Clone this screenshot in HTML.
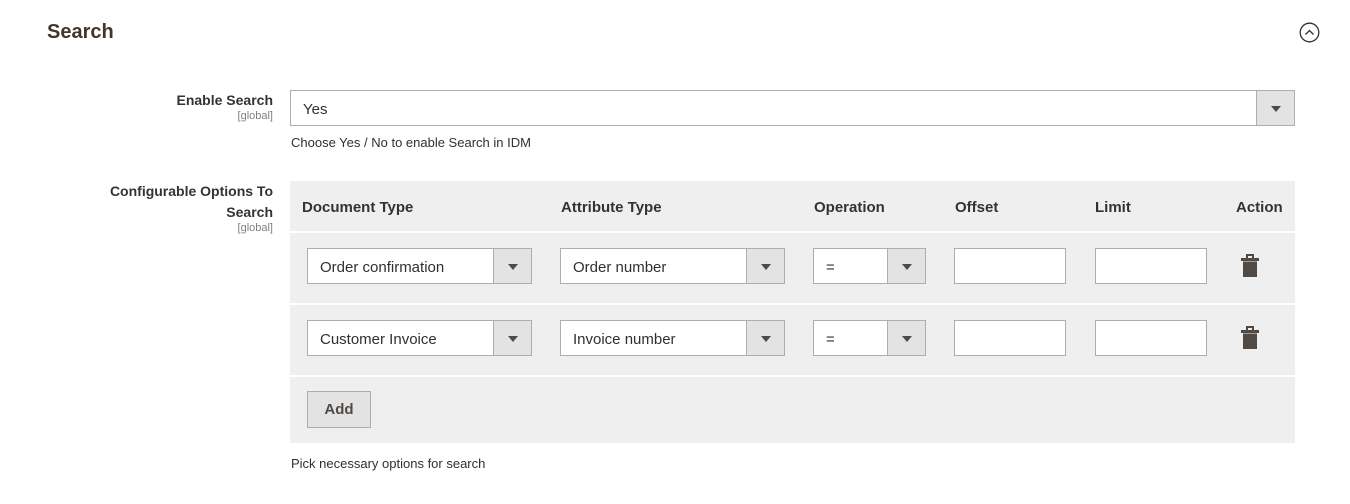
<!DOCTYPE html>
<html><head><style>
*{box-sizing:border-box;margin:0;padding:0}
body{width:1350px;height:504px;background:#fff;font-family:"Liberation Sans",sans-serif;color:#303030;position:relative;overflow:hidden}
.a{position:absolute}
.lbl{position:absolute;right:1077px;text-align:right;font-size:14px;font-weight:bold;color:#333;line-height:21px}
.sc{position:absolute;right:1077px;font-size:11px;color:#808080}
.sel{position:absolute;height:36px;border:1px solid #adadad;background:#fff;font-size:15px;line-height:37px;padding-left:12px;color:#303030}
.sel .ar{position:absolute;right:0;top:0;bottom:0;width:38px;background:#e3e3e3;border-left:1px solid #adadad}
.sel .ar:after{content:"";position:absolute;left:14px;top:15px;border-left:5px solid transparent;border-right:5px solid transparent;border-top:6px solid #514943}
.inp{position:absolute;height:36px;border:1px solid #adadad;background:#fff}
.th{position:absolute;top:199px;font-size:15px;font-weight:bold;color:#333}
.note{position:absolute;font-size:13px;color:#303030}
.trash{position:absolute;width:18px;height:24px}
</style></head><body>
<div class="a" style="left:47px;top:21px;font-size:20px;font-weight:bold;color:#41362f">Search</div>
<svg class="a" style="left:1299px;top:22px" width="21" height="21" viewBox="0 0 21 21"><circle cx="10.5" cy="10.5" r="9.3" fill="none" stroke="#303030" stroke-width="1.3"/><path d="M6.5 12.5 L10.5 8.5 L14.5 12.5" fill="none" stroke="#303030" stroke-width="1.3"/></svg>

<div class="lbl" style="top:90px">Enable Search</div>
<div class="sc" style="top:110px">[global]</div>
<div class="sel" style="left:290px;top:90px;width:1005px">Yes<div class="ar"></div></div>
<div class="note" style="left:291px;top:135px">Choose Yes / No to enable Search in IDM</div>

<div class="lbl" style="top:181px">Configurable Options To<br>Search</div>
<div class="sc" style="top:222px">[global]</div>

<div class="a" style="left:290px;top:181px;width:1005px;height:262px;background:#efefef"></div>
<div class="a" style="left:290px;top:231px;width:1005px;height:2px;background:#fff"></div>
<div class="a" style="left:290px;top:303px;width:1005px;height:2px;background:#fff"></div>
<div class="a" style="left:290px;top:375px;width:1005px;height:2px;background:#fff"></div>
<div class="th" style="left:302px">Document Type</div>
<div class="th" style="left:561px">Attribute Type</div>
<div class="th" style="left:814px">Operation</div>
<div class="th" style="left:955px">Offset</div>
<div class="th" style="left:1095px">Limit</div>
<div class="th" style="left:1236px">Action</div>

<div class="sel" style="left:307px;top:248px;width:225px">Order confirmation<div class="ar"></div></div>
<div class="sel" style="left:560px;top:248px;width:225px">Order number<div class="ar"></div></div>
<div class="sel" style="left:813px;top:248px;width:113px">=<div class="ar"></div></div>
<div class="inp" style="left:954px;top:248px;width:112px"></div>
<div class="inp" style="left:1095px;top:248px;width:112px"></div>

<div class="sel" style="left:307px;top:320px;width:225px">Customer Invoice<div class="ar"></div></div>
<div class="sel" style="left:560px;top:320px;width:225px">Invoice number<div class="ar"></div></div>
<div class="sel" style="left:813px;top:320px;width:113px">=<div class="ar"></div></div>
<div class="inp" style="left:954px;top:320px;width:112px"></div>
<div class="inp" style="left:1095px;top:320px;width:112px"></div>

<svg class="trash" style="left:1241px;top:254px" viewBox="0 0 18 24"><path d="M5 0h8v4h-2V2H7v2H5z M0 4h18v3H0z M2 7.5h14V23H2z" fill="#514943"/></svg>
<svg class="trash" style="left:1241px;top:326px" viewBox="0 0 18 24"><path d="M5 0h8v4h-2V2H7v2H5z M0 4h18v3H0z M2 7.5h14V23H2z" fill="#514943"/></svg>

<div class="a" style="left:307px;top:391px;width:64px;height:37px;background:#e3e3e3;border:1px solid #adadad;font-size:15px;font-weight:bold;color:#514943;text-align:center;line-height:36px">Add</div>
<div class="note" style="left:291px;top:456px">Pick necessary options for search</div>
</body></html>
